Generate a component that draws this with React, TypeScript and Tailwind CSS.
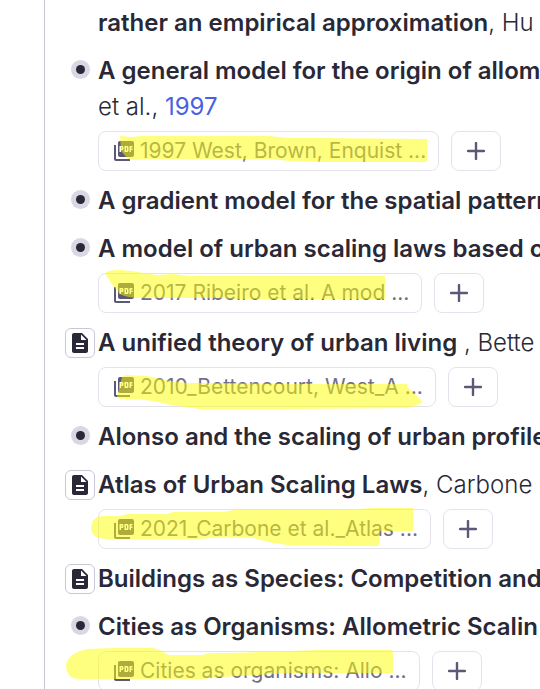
import { MdDescription, MdPictureAsPdf } from "react-icons/md";

interface Attachment {
  name: string;
  marker: string;
}

interface Reference {
  id: number;
  title: string;
  authors?: string;
  year?: string;
  isPage?: boolean;
  attachment?: Attachment;
}

const references: Reference[] = [
  {
    id: 1,
    title: "A general model for the origin of allom",
    authors: "et al., ",
    year: "1997",
    attachment: {
      name: "1997 West, Brown, Enquist ...",
      marker:
        "M22 5 L35 6 L42 5 H172 L190 7 H224 L329 8 V31 H222 L192 30 L172 28 H52 L38 29 L30 28 L23 20 Z",
    },
  },
  { id: 2, title: "A gradient model for the spatial pattern" },
  {
    id: 3,
    title: "A model of urban scaling laws based o",
    attachment: {
      name: "2017 Ribeiro et al. A mod ...",
      marker:
        "M7 1 Q8 -3 22 -3 Q36 -2 45 0 L59 2 L75 1 L92 3 H287 V26 H139 L122 25 H45 Q28 25 22 21 L16 14 Z",
    },
  },
  {
    id: 4,
    title: "A unified theory of urban living",
    authors: " , Bette",
    isPage: true,
    attachment: {
      name: "2010_Bettencourt, West_A ...",
      marker:
        "M24 10 Q26 8 29 8 L49 9 L72 14 L89 16 H102 L192 17 H310 L309 20 L317 27 L325 35 Q318 40 307 41 L192 42 H102 L79 39 L55 34 L39 32 H22 L19 30 Z",
    },
  },
  { id: 5, title: "Alonso and the scaling of urban profile" },
  {
    id: 6,
    title: "Atlas of Urban Scaling Laws",
    authors: ", Carbone",
    isPage: true,
    attachment: {
      name: "2021_Carbone et al._Atlas ...",
      marker:
        "M-7 19 Q-6 7 5 7 H22 L29 5 H69 L75 3 H125 Q140 0 149 0 H259 L275 -1 H315 V22 H282 L281 37 H242 L225 36 H189 L175 34 L155 29 L129 28 L99 30 H9 Q-6 30 -7 19 Z",
    },
  },
  { id: 7, title: "Buildings as Species: Competition and", isPage: true },
  {
    id: 8,
    title: "Cities as Organisms: Allometric Scalin",
    attachment: {
      name: "Cities as organisms: Allo ...",
      marker:
        "M-32 14 Q-30 2 -11 -2 Q30 -4 55 -3 Q64 -1 70 4 H105 Q110 2 114 2 H132 L192 0 L220 -1 H292 Q295 -1 295 2 V22 H192 L175 23 L142 25 L122 26 L105 28 H-18 Q-32 28 -32 14 Z",
    },
  },
];

function Bullet({ isPage }: { isPage?: boolean }) {
  if (isPage) {
    return (
      <button
        aria-label="Open page"
        className="flex size-[30px] items-center justify-center rounded-md border border-[#c9c6da] text-[#292836]"
      >
        <MdDescription size={24} />
      </button>
    );
  }
  return (
    <button
      aria-label="Expand"
      className="mb-[3px] flex size-[19px] items-center justify-center rounded-full bg-[#d8d7e3]"
    >
      <span className="size-[9px] rounded-full bg-[#292836]" />
    </button>
  );
}

function AttachmentRow({ attachment }: { attachment: Attachment }) {
  return (
    <div className="mt-1.5 flex items-start gap-3">
      <a
        href="#"
        className="relative flex h-10 items-center gap-1 rounded-lg border border-[#e4e3ec] pr-3 pl-[13px] text-[21px] font-normal text-[#716e8a]"
      >
        <MdPictureAsPdf size={24} className="shrink-0 text-[#5c5878]" />
        {attachment.name}
        <svg
          aria-hidden="true"
          className="pointer-events-none absolute -top-px -left-px size-full overflow-visible"
        >
          <path d={attachment.marker} fill="#ffff00" fillOpacity="0.5" />
        </svg>
      </a>
      <button
        aria-label="Add attachment"
        className="flex h-10 w-[50px] items-center justify-center rounded-lg border border-[#e4e3ec] text-[#5c5878]"
      >
        <svg
          width="18"
          height="18"
          viewBox="0 0 18 18"
          stroke="currentColor"
          strokeWidth="2.4"
          strokeLinecap="round"
        >
          <path d="M9 1v16M1 9h16" />
        </svg>
      </button>
    </div>
  );
}

function ReferenceItem({ reference }: { reference: Reference }) {
  return (
    <li className="flex">
      <div className="flex h-9 w-9 shrink-0 items-center justify-center">
        <Bullet isPage={reference.isPage} />
      </div>
      <div>
        <p>
          <strong className="font-semibold">{reference.title}</strong>
          {reference.year && <br />}
          {reference.authors}
          {reference.year && (
            <a href="#" className="font-normal text-[#4a62e0]">
              {reference.year}
            </a>
          )}
        </p>
        {reference.attachment && (
          <AttachmentRow attachment={reference.attachment} />
        )}
      </div>
    </li>
  );
}

function App() {
  return (
    <main className="h-screen overflow-hidden bg-white pl-11 font-[Inter,sans-serif] text-[24px] leading-9 font-light whitespace-nowrap text-[#292836]">
      <ul className="flex min-h-full flex-col gap-3 border-l border-[#c9c6da] pt-[5px] pl-[17px]">
        <li className="pl-9">
          <strong className="font-semibold">
            rather an empirical approximation
          </strong>
          , Hu
        </li>
        {references.map((reference) => (
          <ReferenceItem key={reference.id} reference={reference} />
        ))}
      </ul>
    </main>
  );
}

export default App;
